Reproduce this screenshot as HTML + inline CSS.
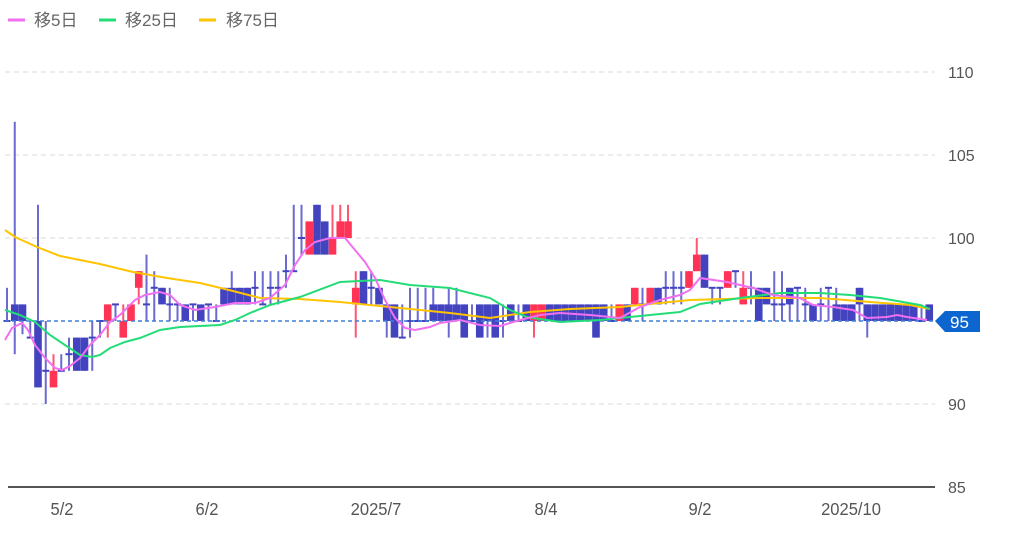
<!DOCTYPE html>
<html><head><meta charset="utf-8"><style>
body{margin:0;background:#fff;width:1024px;height:533px;overflow:hidden;font-family:"Liberation Sans","Noto Sans CJK JP",sans-serif}
svg{position:absolute;left:0;top:0}
</style></head><body>
<svg id="c" width="1024" height="533" xmlns="http://www.w3.org/2000/svg">
<g font-family="Liberation Sans, Noto Sans CJK JP, sans-serif" font-size="17" fill="#666">
<line x1="8" y1="20" x2="25" y2="20" stroke="#f070f0" stroke-width="3"/><text x="34" y="26">移5日</text>
<line x1="99" y1="20" x2="116" y2="20" stroke="#22dd77" stroke-width="3"/><text x="125" y="26">移25日</text>
<line x1="199" y1="20" x2="216" y2="20" stroke="#ffc400" stroke-width="3"/><text x="226" y="26">移75日</text>
</g>
<g stroke="#d8d8d8" stroke-dasharray="5,4" stroke-width="1">
<line x1="5" y1="72" x2="935" y2="72"/><line x1="5" y1="155" x2="935" y2="155"/><line x1="5" y1="238" x2="935" y2="238"/><line x1="5" y1="404" x2="935" y2="404"/>
</g>
<g font-size="16" fill="#555" font-family="Liberation Sans, sans-serif">
<text x="948" y="78">110</text><text x="948" y="161">105</text><text x="948" y="244">100</text><text x="948" y="410">90</text><text x="948" y="493">85</text>
</g>
<line x1="8" y1="487" x2="935" y2="487" stroke="#555" stroke-width="2"/>
<g font-size="18" fill="#555" font-family="Liberation Sans, sans-serif" text-anchor="middle">
<text x="62" y="515" transform="translate(62 0) scale(0.92 1) translate(-62 0)">5/2</text>
<text x="207" y="515" transform="translate(207 0) scale(0.92 1) translate(-207 0)">6/2</text>
<text x="376" y="515" transform="translate(376 0) scale(0.92 1) translate(-376 0)">2025/7</text>
<text x="546" y="515" transform="translate(546 0) scale(0.92 1) translate(-546 0)">8/4</text>
<text x="700" y="515" transform="translate(700 0) scale(0.92 1) translate(-700 0)">9/2</text>
<text x="851" y="515" transform="translate(851 0) scale(0.92 1) translate(-851 0)">2025/10</text>
</g>
<g id="cd"></g>
<line x1="5" y1="321" x2="935" y2="321" stroke="#3f7fd6" stroke-dasharray="4,3" stroke-width="1.5"/>
<polyline fill="none" stroke="#ffc400" stroke-width="2" points="5,230 15,237 37,247 60,256 100,264 133,272 167,278 200,283 233,291 260,298 300,299 340,302 400,308 450,313 490,318 530,312 570,309 620,307 690,300 760,298 820,298 870,302 910,305 930,309"/>
<polyline fill="none" stroke="#22dd77" stroke-width="2" points="5,310 20,315 35,322 50,335 65,345 80,355 92,357 100,355 110,348 125,342 140,338 160,330 180,327 200,326 220,325 235,320 250,313 270,305 300,297 340,282 380,280 410,285 450,288 490,298 510,310 527,317 560,322 600,320 630,317 680,312 700,304 740,298 780,293 820,293 850,295 880,298 920,305 930,309"/>
<polyline fill="none" stroke="#f070f0" stroke-width="2" points="5,340 12,328 22,323 28,330 35,345 45,358 55,368 62,370 70,366 80,358 90,345 100,335 110,322 120,315 135,300 145,295 160,292 170,295 180,305 195,310 215,307 235,303 255,303 270,298 285,285 295,265 305,250 315,242 330,238 345,238 355,250 365,262 375,278 385,300 395,318 405,328 415,330 430,327 440,323 460,320 480,325 500,326 520,320 540,315 560,313 590,315 620,318 640,307 660,300 680,295 690,290 700,278 727,282 753,288 773,295 800,298 813,305 833,307 853,310 867,318 887,317 897,315 907,317 927,320"/>
<path d="M935 321 L945 311 L980 311 L980 332 L945 332 Z" fill="#0d66d0"/>
<text x="950" y="328" font-size="17" fill="#fff" font-family="Liberation Sans, sans-serif">95</text>
</svg>
<script>
var d=[[95,95,97,95],[96,95,107,93],[96,95,96,94.2],[94,94,95,94],[95,91,102,91],[92,92,95,90],[91,92,93,91],[92,92,93,92],[93,93,94,92],[94,92,94,92],[94,92,94,92],[94,94,95,92],[95,95,95,94],[95,96,96,94],[96,96,96,95],[94,95,96,94],[95,96,96,95],[97,98,98,96],[96,96,99,95],[97,97,98,95],[97,96,97,96],[96,96,97,95],[96,96,96,95],[96,95,96,95],[96,96,96,95],[96,95,96,95],[96,96,96,95],[95,95,96,95],[97,96,97,96],[97,96,98,96],[97,96,97,96],[97,96,97,96],[97,97,98,96],[96,96,98,96],[97,97,98,96],[97,97,98,96],[98,98,99,97],[98,98,102,98],[100,100,102,99],[99,101,101,99],[102,99,102,99],[101,99,101,99],[99,100,102,99],[100,101,102,100],[100,101,102,100],[96,97,98,94],[98,96,98,96],[97,97,98,96],[97,96,97,96],[96,95,96,94],[96,94,96,94],[94,94,96,94],[95,95,97,94],[95,95,97,95],[95,95,97,95],[96,95,97,95],[96,95,96,95],[96,95,97,94],[96,95,97,95],[96,94,96,94],[95,95,96,95],[96,94,96,94],[96,95,96,94],[96,94,96,94],[95,95,96,94],[96,95,96,95],[95,95,96,95],[96,95,96,95],[95,96,96,94],[95,96,96,95],[96,95,96,95],[96,95,96,95],[96,95,96,95],[96,95,96,95],[96,95,96,95],[96,95,96,95],[96,94,96,94],[96,95,96,95],[95,95,96,95],[95,96,96,95],[96,95,96,95],[96,97,97,96],[96,96,97,95],[96,97,97,96],[97,96,97,96],[97,97,98,96],[97,97,98,96],[97,97,98,96],[97,98,98,97],[98,99,100,98],[99,97,99,97],[97,97,97,96],[97,97,97,96],[97,98,98,97],[98,98,98,97],[96,97,98,96],[97,97,98,96],[97,95,97,95],[97,96,97,96],[96,96,98,95],[96,96,98,95],[97,96,97,95],[97,97,97,95],[96,96,97,95],[96,95,96,95],[96,96,97,95],[97,97,97,95],[96,95,97,95],[96,95,96,95],[96,95,96,95],[97,96,97,95],[96,95,96,94],[96,95,96,95],[96,95,96,95],[96,95,96,95],[96,95,96,95],[96,95,96,95],[96,95,96,95],[95,95,96,95],[96,95,96,95]];
function Y(p){return 321-(p-95)*16.6}
var s='';
d.forEach(function(c,i){var x=7+i*7.75,o=c[0],cl=c[1],h=c[2],l=c[3];
var up=cl>o,col=up?'#ff3355':'#4343c0',wc=up?'#ff5570':'#6a6ad0';
s+='<line x1="'+x+'" x2="'+x+'" y1="'+Y(h)+'" y2="'+Y(l)+'" stroke="'+wc+'" stroke-width="2"/>';
if(o==cl){s+='<rect x="'+(x-3.5)+'" y="'+(Y(o)-1)+'" width="7" height="2" fill="#4343c0"/>';}
else{var t=Y(Math.max(o,cl)),b=Y(Math.min(o,cl));s+='<rect x="'+(x-3.8)+'" y="'+t+'" width="7.6" height="'+(b-t)+'" fill="'+col+'"/>';}
});
document.getElementById('cd').innerHTML=s;
</script>
</body></html>
